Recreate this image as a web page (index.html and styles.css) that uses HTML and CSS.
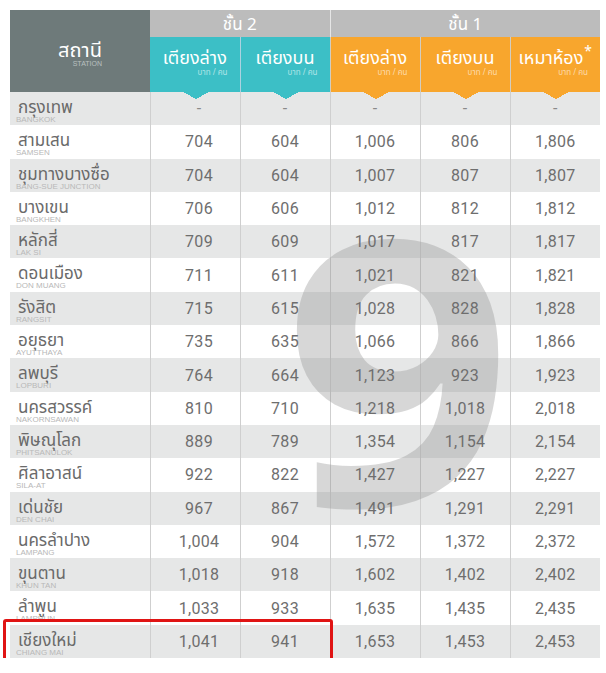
FILE: index.html
```html
<!DOCTYPE html>
<html lang="th">
<head>
<meta charset="utf-8">
<link rel="stylesheet" href="styles.css">
</head>
<body>
<div class="wrap">
  <table class="fares">
    <colgroup>
      <col class="c-st"><col class="c-n"><col class="c-n"><col class="c-n"><col class="c-n"><col class="c-n">
    </colgroup>
    <thead>
      <tr class="h1">
        <th class="station" rowspan="2"><span class="th-main">สถานี</span><span class="th-sub">STATION</span></th>
        <th class="cls" colspan="2">ชั้น 2</th>
        <th class="cls" colspan="3">ชั้น 1</th>
      </tr>
      <tr class="h2">
        <th class="teal"><span class="th-main">เตียงล่าง</span><span class="th-sub">บาท / คน</span></th>
        <th class="teal"><span class="th-main">เตียงบน</span><span class="th-sub">บาท / คน</span></th>
        <th class="orange"><span class="th-main">เตียงล่าง</span><span class="th-sub">บาท / คน</span></th>
        <th class="orange"><span class="th-main">เตียงบน</span><span class="th-sub">บาท / คน</span></th>
        <th class="orange"><span class="th-main">เหมาห้อง<sup class="star">*</sup></span><span class="th-sub">บาท / คน</span></th>
      </tr>
    </thead>
    <tbody>
      <tr class="first"><td class="st"><span class="th">กรุงเทพ</span><span class="en">BANGKOK</span></td><td class="arr-t"><span class="v">-</span></td><td class="arr-t"><span class="v">-</span></td><td class="arr-o"><span class="v">-</span></td><td class="arr-o"><span class="v">-</span></td><td class="arr-o"><span class="v">-</span></td></tr>
      <tr><td class="st"><span class="th">สามเสน</span><span class="en">SAMSEN</span></td><td><span class="v">704</span></td><td><span class="v">604</span></td><td><span class="v">1,006</span></td><td><span class="v">806</span></td><td><span class="v">1,806</span></td></tr>
      <tr><td class="st"><span class="th">ชุมทางบางซื่อ</span><span class="en">BANG-SUE JUNCTION</span></td><td><span class="v">704</span></td><td><span class="v">604</span></td><td><span class="v">1,007</span></td><td><span class="v">807</span></td><td><span class="v">1,807</span></td></tr>
      <tr><td class="st"><span class="th">บางเขน</span><span class="en">BANGKHEN</span></td><td><span class="v">706</span></td><td><span class="v">606</span></td><td><span class="v">1,012</span></td><td><span class="v">812</span></td><td><span class="v">1,812</span></td></tr>
      <tr><td class="st"><span class="th">หลักสี่</span><span class="en">LAK SI</span></td><td><span class="v">709</span></td><td><span class="v">609</span></td><td><span class="v">1,017</span></td><td><span class="v">817</span></td><td><span class="v">1,817</span></td></tr>
      <tr><td class="st"><span class="th">ดอนเมือง</span><span class="en">DON MUANG</span></td><td><span class="v">711</span></td><td><span class="v">611</span></td><td><span class="v">1,021</span></td><td><span class="v">821</span></td><td><span class="v">1,821</span></td></tr>
      <tr><td class="st"><span class="th">รังสิต</span><span class="en">RANGSIT</span></td><td><span class="v">715</span></td><td><span class="v">615</span></td><td><span class="v">1,028</span></td><td><span class="v">828</span></td><td><span class="v">1,828</span></td></tr>
      <tr><td class="st"><span class="th">อยุธยา</span><span class="en">AYUTTHAYA</span></td><td><span class="v">735</span></td><td><span class="v">635</span></td><td><span class="v">1,066</span></td><td><span class="v">866</span></td><td><span class="v">1,866</span></td></tr>
      <tr><td class="st"><span class="th">ลพบุรี</span><span class="en">LOPBURI</span></td><td><span class="v">764</span></td><td><span class="v">664</span></td><td><span class="v">1,123</span></td><td><span class="v">923</span></td><td><span class="v">1,923</span></td></tr>
      <tr><td class="st"><span class="th">นครสวรรค์</span><span class="en">NAKORNSAWAN</span></td><td><span class="v">810</span></td><td><span class="v">710</span></td><td><span class="v">1,218</span></td><td><span class="v">1,018</span></td><td><span class="v">2,018</span></td></tr>
      <tr><td class="st"><span class="th">พิษณุโลก</span><span class="en">PHITSANULOK</span></td><td><span class="v">889</span></td><td><span class="v">789</span></td><td><span class="v">1,354</span></td><td><span class="v">1,154</span></td><td><span class="v">2,154</span></td></tr>
      <tr><td class="st"><span class="th">ศิลาอาสน์</span><span class="en">SILA-AT</span></td><td><span class="v">922</span></td><td><span class="v">822</span></td><td><span class="v">1,427</span></td><td><span class="v">1,227</span></td><td><span class="v">2,227</span></td></tr>
      <tr><td class="st"><span class="th">เด่นชัย</span><span class="en">DEN CHAI</span></td><td><span class="v">967</span></td><td><span class="v">867</span></td><td><span class="v">1,491</span></td><td><span class="v">1,291</span></td><td><span class="v">2,291</span></td></tr>
      <tr><td class="st"><span class="th">นครลำปาง</span><span class="en">LAMPANG</span></td><td><span class="v">1,004</span></td><td><span class="v">904</span></td><td><span class="v">1,572</span></td><td><span class="v">1,372</span></td><td><span class="v">2,372</span></td></tr>
      <tr><td class="st"><span class="th">ขุนตาน</span><span class="en">KHUN TAN</span></td><td><span class="v">1,018</span></td><td><span class="v">918</span></td><td><span class="v">1,602</span></td><td><span class="v">1,402</span></td><td><span class="v">2,402</span></td></tr>
      <tr><td class="st"><span class="th">ลำพูน</span><span class="en">LAMPHUN</span></td><td><span class="v">1,033</span></td><td><span class="v">933</span></td><td><span class="v">1,635</span></td><td><span class="v">1,435</span></td><td><span class="v">2,435</span></td></tr>
      <tr><td class="st"><span class="th">เชียงใหม่</span><span class="en">CHIANG MAI</span></td><td><span class="v">1,041</span></td><td><span class="v">941</span></td><td><span class="v">1,653</span></td><td><span class="v">1,453</span></td><td><span class="v">2,453</span></td></tr>
    </tbody>
  </table>
  <div class="mark" aria-hidden="true">9</div>
  <div class="highlight"></div>
</div>
</body>
</html>
```

FILE: styles.css
```css
html, body {
  margin: 0;
  padding: 0;
  background: #ffffff;
}
body {
  padding: 10px 0 0 10px;
  font-family: "Noto Sans", "Noto Sans Thai", "Loma", "Garuda", sans-serif;
}
.wrap {
  position: relative;
  width: 590px;
}
.fares {
  width: 590px;
  table-layout: fixed;
  border-collapse: collapse;
  border-spacing: 0;
}
.c-st { width: 140px; }
.c-n { width: 90px; }

th {
  padding: 0;
  color: #ffffff;
  font-weight: 400;
}
.h1 th { height: 27px; }
.h2 th { height: 55px; }

.station {
  background: #6e7a7a;
  text-align: center;
  vertical-align: middle;
}
.station .th-main {
  display: block;
  font-size: 20px;
  line-height: 20px;
  padding-top: 6px;
}
.station .th-sub {
  display: block;
  font-size: 7px;
  line-height: 8px;
  color: #b9c0c0;
  text-align: right;
  padding-right: 48px;
  font-family: "Liberation Sans", sans-serif;
}

.cls {
  background: #bcbcbc;
  font-size: 17px;
  line-height: 16px;
  padding: 0;
  overflow: hidden;
  vertical-align: middle;
}
.cls + .cls { border-left: 1px solid #e6e6e6; }

.teal { background: #3cbfc6; }
.orange { background: #f8a62d; }
.h2 th { vertical-align: top; }
.h2 th + th { border-left: 1px solid rgba(200, 215, 230, 0.8); }
.h2 .th-main {
  display: block;
  font-size: 18px;
  line-height: 20px;
  text-align: center;
  padding-top: 10px;
}
.h2 .th-sub {
  display: block;
  font-size: 8px;
  line-height: 10px;
  text-align: right;
  padding-right: 12px;
  color: rgba(255, 255, 255, 0.6);
}
.star {
  font-size: 14px;
  line-height: 0;
  vertical-align: 8px;
  margin-left: 1px;
}

tbody tr { height: 33.3px; }
tbody tr:nth-child(odd) { background: #e6e7e7; }
tbody tr:nth-child(even) { background: #ffffff; }
td {
  padding: 0;
  text-align: center;
  vertical-align: middle;
  color: #6e6e6e;
  font-family: "Roboto", "Noto Sans", sans-serif;
  font-size: 16px;
  border-left: 1px solid #cfcfcf;
}
td:nth-child(2) { padding-left: 8px; }
td.st { border-left: 0; text-align: left; vertical-align: top; }
.v {
  position: relative;
  z-index: 2;
  letter-spacing: 0.3px;
}
.th {
  display: block;
  position: relative;
  z-index: 2;
  font-family: "Noto Sans", "Noto Sans Thai", "Loma", sans-serif;
  font-size: 17px;
  line-height: 20px;
  color: #6a6a6a;
  padding: 5px 0 0 8px;
}
.en {
  display: block;
  position: relative;
  z-index: 2;
  font-family: "Liberation Sans", sans-serif;
  font-size: 8px;
  line-height: 8px;
  color: #b8b8b8;
  padding-left: 6px;
  margin-top: -1px;
}

.arr-t, .arr-o {
  background-repeat: no-repeat;
  background-size: 13px 7px, 13px 7px;
  background-position: calc(50% - 6px) top, calc(50% + 7px) top;
}
.arr-t {
  background-image: linear-gradient(to bottom left, #3cbfc6 50%, transparent 50%), linear-gradient(to bottom right, #3cbfc6 50%, transparent 50%);
}
.arr-o {
  background-image: linear-gradient(to bottom left, #f8a62d 50%, transparent 50%), linear-gradient(to bottom right, #f8a62d 50%, transparent 50%);
}
.first .v { color: #8a8a8a; }

.mark {
  position: absolute;
  left: 274px;
  top: 168px;
  z-index: 1;
  font-family: "Open Sans", sans-serif;
  font-weight: 700;
  font-size: 370px;
  line-height: 1;
  color: rgba(150, 150, 150, 0.38);
  transform: scaleX(1.08);
  transform-origin: left top;
  pointer-events: none;
}

.highlight {
  position: absolute;
  left: -7px;
  top: 609px;
  width: 324px;
  height: 43px;
  border: 3px solid #e01414;
  border-radius: 3px;
  z-index: 3;
  pointer-events: none;
}
```
